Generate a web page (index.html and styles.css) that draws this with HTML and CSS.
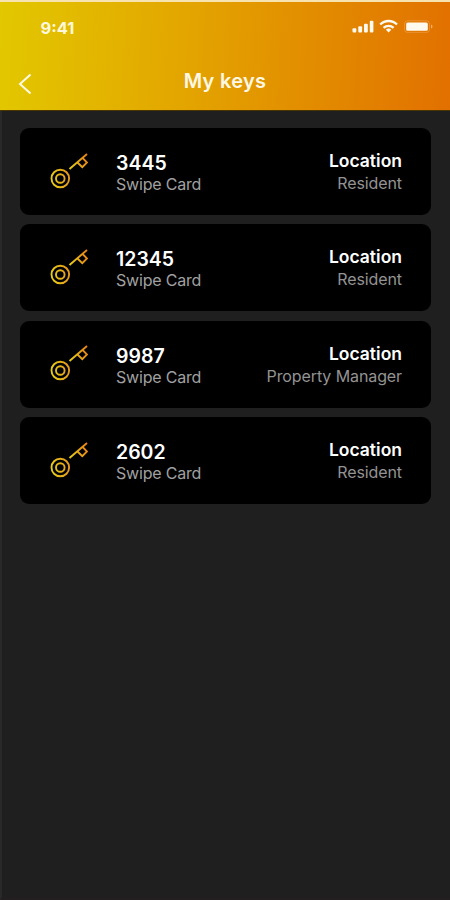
FILE: index.html
```
<!DOCTYPE html>
<html lang="en">
<head>
  <meta charset="UTF-8">
  <meta name="viewport" content="width=device-width, initial-scale=1.0">
  <title>My keys</title>
  <link rel="stylesheet" href="styles.css">
</head>
<body>
  <svg class="defs" width="0" height="0">
    <defs>
      <linearGradient id="ring" gradientUnits="userSpaceOnUse" x1="1" y1="25" x2="20" y2="23">
        <stop offset="0" stop-color="#e6cf18"/>
        <stop offset="1" stop-color="#e6941c"/>
      </linearGradient>
      <linearGradient id="shaft" gradientUnits="userSpaceOnUse" x1="19" y1="14" x2="38" y2="8">
        <stop offset="0" stop-color="#e6cf18"/>
        <stop offset="1" stop-color="#e88416"/>
      </linearGradient>
      <symbol id="key" viewBox="0 0 38 36">
        <g fill="none" stroke="url(#ring)" stroke-width="1.9">
          <circle cx="10.3" cy="25.5" r="8.8"/>
          <circle cx="10.3" cy="25.5" r="4.3"/>
        </g>
        <path d="M19.5 16 37 1M27.5 9.5l4.8 4.6 4.7-4.6-4-4.2" fill="none" stroke="url(#shaft)" stroke-width="1.9"/>
      </symbol>
    </defs>
  </svg>

  <header class="header">
    <div class="status-bar">
      <span class="time">9:41</span>
      <svg class="status-icons" width="82" height="16" viewBox="0 0 82 16" fill="#fffaf0">
        <rect x="0.5" y="9.3" width="3.8" height="4.2" rx="1"/>
        <rect x="6.3" y="7.3" width="3.8" height="6.2" rx="1"/>
        <rect x="12" y="4.7" width="3.8" height="8.8" rx="1"/>
        <rect x="17.8" y="1.8" width="3.6" height="11.7" rx="1"/>
        <g fill="none" stroke="#fffaf0" stroke-width="2.3">
          <path d="M28.2 5.5a11.8 11.8 0 0 1 16.8 0"/>
          <path d="M31.6 8.8a7.2 7.2 0 0 1 10 0"/>
        </g>
        <path d="M36.6 13.6l-2.7-2.8a4 4 0 0 1 5.4 0z"/>
        <rect x="52.5" y="1.8" width="25" height="11.6" rx="3" fill="none" stroke="#fffaf0" stroke-opacity=".2"/>
        <rect x="54.2" y="3.4" width="21.6" height="8.4" rx="1.5"/>
        <path d="M79 5.6c2 .8 2 3.2 0 4z" opacity=".45"/>
      </svg>
    </div>
    <div class="nav-bar">
      <button class="back-btn" aria-label="Back">
        <svg width="14" height="22" viewBox="0 0 14 22" fill="none" stroke="#fffae6" stroke-width="2"><path d="M12.5 1.5 2 11l10.5 9.5"/></svg>
      </button>
      <h1>My keys</h1>
    </div>
  </header>

  <main class="key-list">
    <div class="key-card">
      <svg class="key-icon"><use href="#key"/></svg>
      <div class="key-info">
        <div class="key-number">3445</div>
        <div class="key-type">Swipe Card</div>
      </div>
      <div class="key-location">
        <div class="location-label">Location</div>
        <div class="location-name">Resident</div>
      </div>
    </div>
    <div class="key-card">
      <svg class="key-icon"><use href="#key"/></svg>
      <div class="key-info">
        <div class="key-number">12345</div>
        <div class="key-type">Swipe Card</div>
      </div>
      <div class="key-location">
        <div class="location-label">Location</div>
        <div class="location-name">Resident</div>
      </div>
    </div>
    <div class="key-card">
      <svg class="key-icon"><use href="#key"/></svg>
      <div class="key-info">
        <div class="key-number">9987</div>
        <div class="key-type">Swipe Card</div>
      </div>
      <div class="key-location">
        <div class="location-label">Location</div>
        <div class="location-name">Property Manager</div>
      </div>
    </div>
    <div class="key-card">
      <svg class="key-icon"><use href="#key"/></svg>
      <div class="key-info">
        <div class="key-number">2602</div>
        <div class="key-type">Swipe Card</div>
      </div>
      <div class="key-location">
        <div class="location-label">Location</div>
        <div class="location-name">Resident</div>
      </div>
    </div>
  </main>
</body>
</html>
```
FILE: styles.css
```
* {
  margin: 0;
  padding: 0;
  box-sizing: border-box;
}

body {
  display: flex;
  flex-direction: column;
  background-color: #1f1f1f;
  min-height: 100vh;
  font-family: Inter, "Liberation Sans", sans-serif;
  color: #fff;
}

.defs {
  display: block;
}

.header {
  height: 111px;
  background: linear-gradient(93deg, #e2c800 0%, #e3a600 40%, #e28700 75%, #e27000 100%);
  border-top: 2px solid #f6e3b0;
  border-bottom: 1px solid #4a3500;
}

.status-bar {
  display: flex;
  justify-content: space-between;
  align-items: center;
  height: 50px;
  padding: 0 16px 0 40.5px;
}

.time {
  padding-top: 2px;
  font-size: 16.5px;
  font-weight: 700;
  color: #fff8dc;
}

.nav-bar {
  display: grid;
  grid-template-columns: 40px 1fr 40px;
  align-items: center;
  height: 58px;
  padding: 0 18px;
}

.back-btn {
  display: flex;
  padding-top: 5px;
  background: none;
  border: none;
}

h1 {
  grid-column: 2;
  font-size: 20px;
  font-weight: 600;
  line-height: 24px;
  letter-spacing: 0.3px;
  text-align: center;
  color: #fff8e6;
}

.key-list {
  flex: 1;
  display: flex;
  flex-direction: column;
  gap: 9.4px;
  padding: 17px 19px 0 18px;
  border-left: 2px solid #292929;
  border-bottom: 3px solid #231f20;
}

.key-card {
  display: flex;
  align-items: center;
  height: 87px;
  padding: 0 29px 0 30px;
  background-color: #000;
  border-radius: 9px;
}

.key-icon {
  width: 38px;
  height: 36px;
  margin: 0 28px 2px 0;
}

.key-info {
  flex: 1;
  padding-top: 4px;
}

.key-number {
  font-size: 19.5px;
  font-weight: 600;
  line-height: 22px;
}

.key-type {
  font-size: 16px;
  line-height: 21px;
  letter-spacing: -0.2px;
  color: #a0a0a0;
}

.key-location {
  padding-top: 2px;
  text-align: right;
}

.location-label {
  font-size: 17.5px;
  font-weight: 600;
  line-height: 22px;
}

.location-name {
  font-size: 16px;
  line-height: 23px;
  letter-spacing: -0.1px;
  color: #939393;
}
```
